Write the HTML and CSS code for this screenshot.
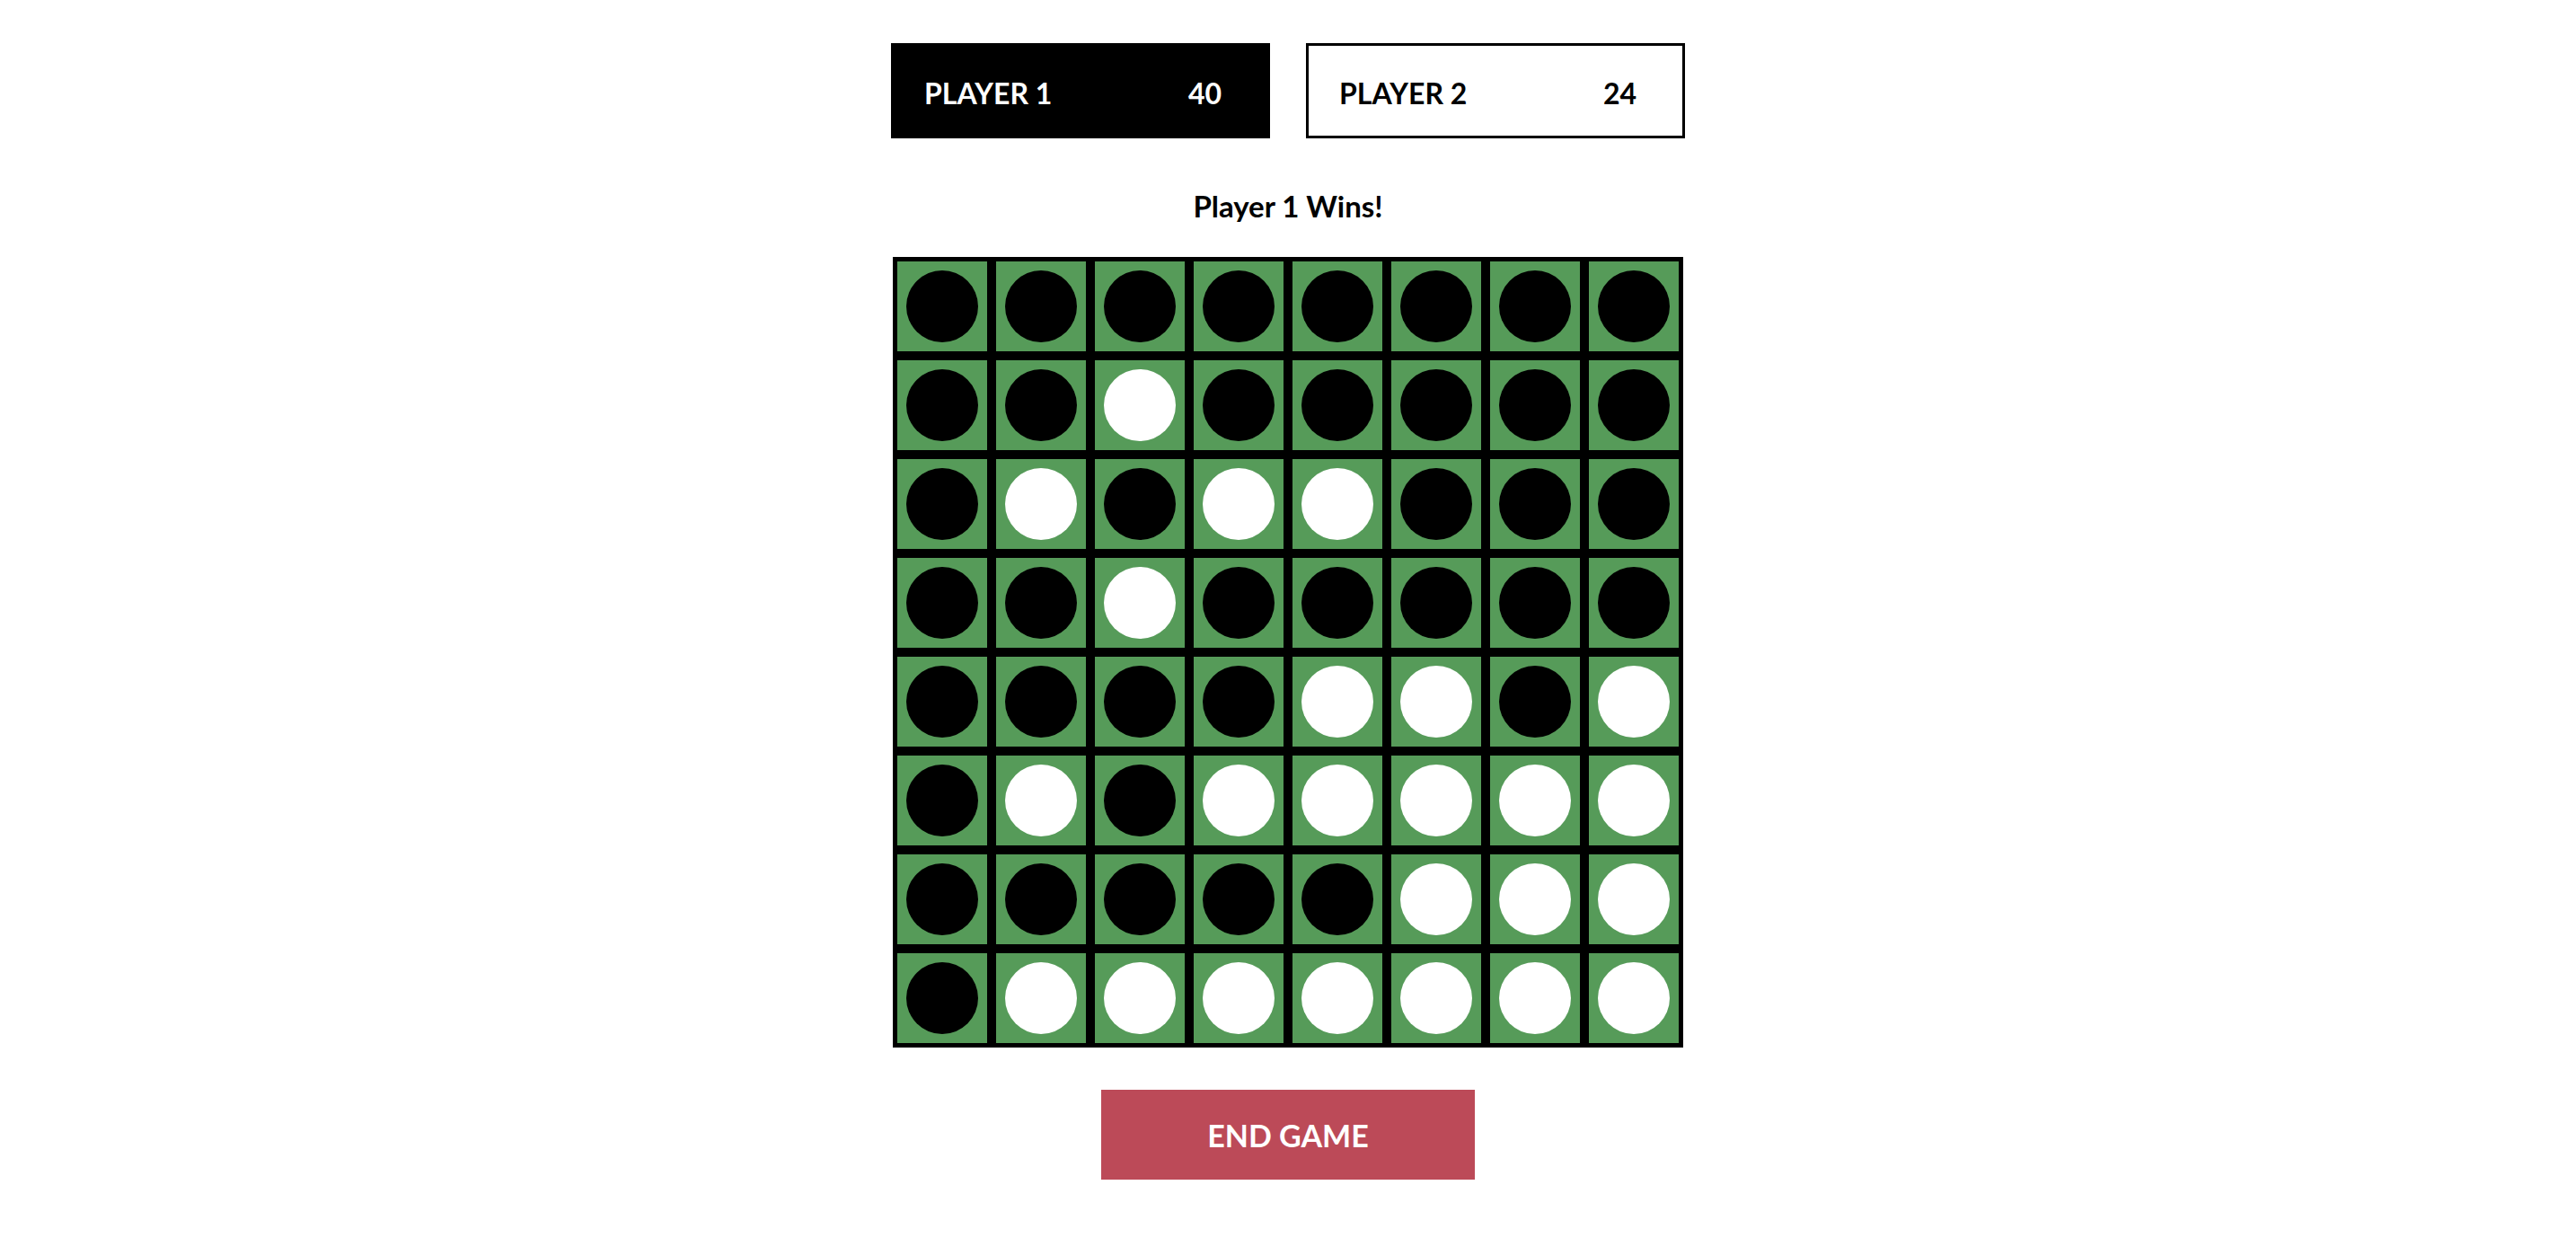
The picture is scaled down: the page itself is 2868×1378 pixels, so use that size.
FILE: index.html
```html
<!DOCTYPE html>
<html>
<head>
<meta charset="utf-8">
<link rel="stylesheet" href="styles.css">
</head>
<body>
<main class="game">
  <div class="scores">
    <div class="score score-active"><span class="name">PLAYER 1</span><span class="pts">40</span></div>
    <div class="score"><span class="name">PLAYER 2</span><span class="pts">24</span></div>
  </div>
  <div class="status">Player 1 Wins!</div>
  <div class="board">
    <div class="cell"><span class="disc b"></span></div><div class="cell"><span class="disc b"></span></div><div class="cell"><span class="disc b"></span></div><div class="cell"><span class="disc b"></span></div><div class="cell"><span class="disc b"></span></div><div class="cell"><span class="disc b"></span></div><div class="cell"><span class="disc b"></span></div><div class="cell"><span class="disc b"></span></div>
    <div class="cell"><span class="disc b"></span></div><div class="cell"><span class="disc b"></span></div><div class="cell"><span class="disc w"></span></div><div class="cell"><span class="disc b"></span></div><div class="cell"><span class="disc b"></span></div><div class="cell"><span class="disc b"></span></div><div class="cell"><span class="disc b"></span></div><div class="cell"><span class="disc b"></span></div>
    <div class="cell"><span class="disc b"></span></div><div class="cell"><span class="disc w"></span></div><div class="cell"><span class="disc b"></span></div><div class="cell"><span class="disc w"></span></div><div class="cell"><span class="disc w"></span></div><div class="cell"><span class="disc b"></span></div><div class="cell"><span class="disc b"></span></div><div class="cell"><span class="disc b"></span></div>
    <div class="cell"><span class="disc b"></span></div><div class="cell"><span class="disc b"></span></div><div class="cell"><span class="disc w"></span></div><div class="cell"><span class="disc b"></span></div><div class="cell"><span class="disc b"></span></div><div class="cell"><span class="disc b"></span></div><div class="cell"><span class="disc b"></span></div><div class="cell"><span class="disc b"></span></div>
    <div class="cell"><span class="disc b"></span></div><div class="cell"><span class="disc b"></span></div><div class="cell"><span class="disc b"></span></div><div class="cell"><span class="disc b"></span></div><div class="cell"><span class="disc w"></span></div><div class="cell"><span class="disc w"></span></div><div class="cell"><span class="disc b"></span></div><div class="cell"><span class="disc w"></span></div>
    <div class="cell"><span class="disc b"></span></div><div class="cell"><span class="disc w"></span></div><div class="cell"><span class="disc b"></span></div><div class="cell"><span class="disc w"></span></div><div class="cell"><span class="disc w"></span></div><div class="cell"><span class="disc w"></span></div><div class="cell"><span class="disc w"></span></div><div class="cell"><span class="disc w"></span></div>
    <div class="cell"><span class="disc b"></span></div><div class="cell"><span class="disc b"></span></div><div class="cell"><span class="disc b"></span></div><div class="cell"><span class="disc b"></span></div><div class="cell"><span class="disc b"></span></div><div class="cell"><span class="disc w"></span></div><div class="cell"><span class="disc w"></span></div><div class="cell"><span class="disc w"></span></div>
    <div class="cell"><span class="disc b"></span></div><div class="cell"><span class="disc w"></span></div><div class="cell"><span class="disc w"></span></div><div class="cell"><span class="disc w"></span></div><div class="cell"><span class="disc w"></span></div><div class="cell"><span class="disc w"></span></div><div class="cell"><span class="disc w"></span></div><div class="cell"><span class="disc w"></span></div>
  </div>
  <button class="end-btn">END GAME</button>
</main>
</body>
</html>
```

FILE: styles.css
```css
html, body {
  margin: 0;
  padding: 0;
  background: #ffffff;
}
body {
  font-family: Lato, "Liberation Sans", sans-serif;
  color: #000000;
}
.game {
  width: 884px;
  margin: 0 auto;
  padding-top: 48px;
  display: flex;
  flex-direction: column;
  align-items: center;
}
.scores {
  display: flex;
  gap: 40px;
  width: 884px;
}
.score {
  box-sizing: border-box;
  width: 422px;
  height: 106px;
  border: 3px solid #000;
  background: #fff;
  color: #000;
  display: flex;
  align-items: center;
  justify-content: space-between;
  padding: 5px 51px 0 34px;
  font-size: 32px;
  font-weight: 700;
}
.score-active {
  background: #000;
  color: #fff;
}
.status {
  margin-top: 55px;
  margin-bottom: 37px;
  font-size: 33px;
  line-height: 40px;
  font-weight: 700;
}
.board {
  display: grid;
  grid-template-columns: repeat(8, 110px);
  grid-template-rows: repeat(8, 110px);
  width: 880px;
}
.cell {
  box-sizing: border-box;
  border: 5px solid #000;
  background: #569b59;
  display: flex;
  align-items: center;
  justify-content: center;
}
.disc {
  width: 80px;
  height: 80px;
  border-radius: 50%;
}
.disc.b { background: #000; }
.disc.w { background: #fff; }
.end-btn {
  margin-top: 47px;
  width: 416px;
  height: 100px;
  border: none;
  background: #bc4a58;
  color: #fff;
  font-family: Lato, "Liberation Sans", sans-serif;
  font-size: 34px;
  font-weight: 700;
  display: flex;
  align-items: center;
  justify-content: center;
  padding: 0;
}
```
